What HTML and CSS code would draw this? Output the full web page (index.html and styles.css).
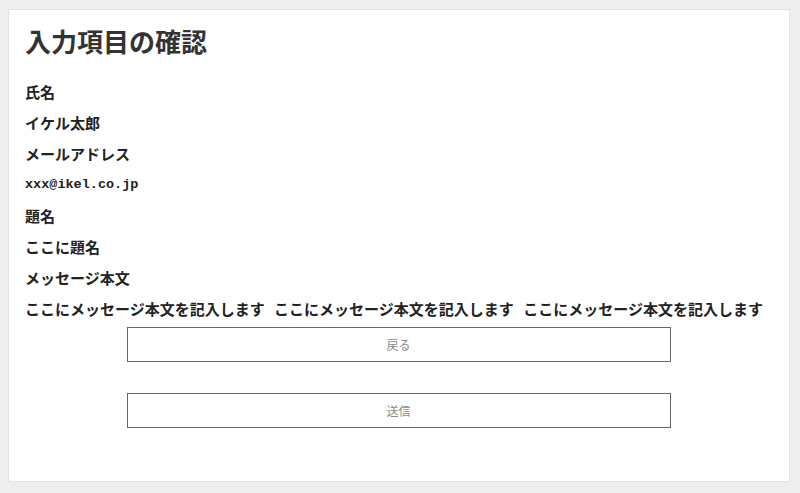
FILE: index.html
```html
<!DOCTYPE html>
<html lang="ja">
<head>
    <meta charset="UTF-8">
    <meta name="viewport" content="width=device-width, initial-scale=1.0">
    <title>入力項目の確認</title>
    <link rel="stylesheet" href="styles.css">
</head>
<body>
    <div class="card">
        <h1>入力項目の確認</h1>
        <div class="confirm-list">
            <p class="label">氏名</p>
            <p class="value">イケル太郎</p>
            <p class="label">メールアドレス</p>
            <p class="value mono">xxx@ikel.co.jp</p>
            <p class="label">題名</p>
            <p class="value">ここに題名</p>
            <p class="label">メッセージ本文</p>
            <p class="value">ここにメッセージ本文を記入します ここにメッセージ本文を記入します ここにメッセージ本文を記入します</p>
        </div>
        <div class="actions">
            <button type="button" class="btn">戻る</button>
            <button type="submit" class="btn">送信</button>
        </div>
    </div>
</body>
</html>
```

FILE: styles.css
```css
body { margin: 0; padding: 9px 10px 12px 8px; background: #eeeeee; font-family: "Noto Sans CJK JP", "Noto Sans", sans-serif; color: #222; }
.card { background: #fff; border: 1px solid #e2e2e2; padding: 13px 17px 53px 16px; }
h1 { margin: 0 0 17px; font-size: 26px; line-height: 36px; font-weight: bold; color: #333; }
.confirm-list p { margin: 0; height: 31px; font-size: 15px; line-height: 31px; font-weight: bold; white-space: nowrap; word-spacing: 6px; }
.confirm-list .mono { font-family: "Liberation Mono", "DejaVu Sans Mono", monospace; font-size: 13.5px; }
.actions { display: flex; flex-direction: column; align-items: center; gap: 31px; margin-top: 3px; }
.btn { width: 544px; height: 35px; background: #fff; border: 1px solid #666; border-radius: 0; font-family: "Noto Sans CJK JP", sans-serif; font-size: 12px; color: #888; padding: 0; }
```
